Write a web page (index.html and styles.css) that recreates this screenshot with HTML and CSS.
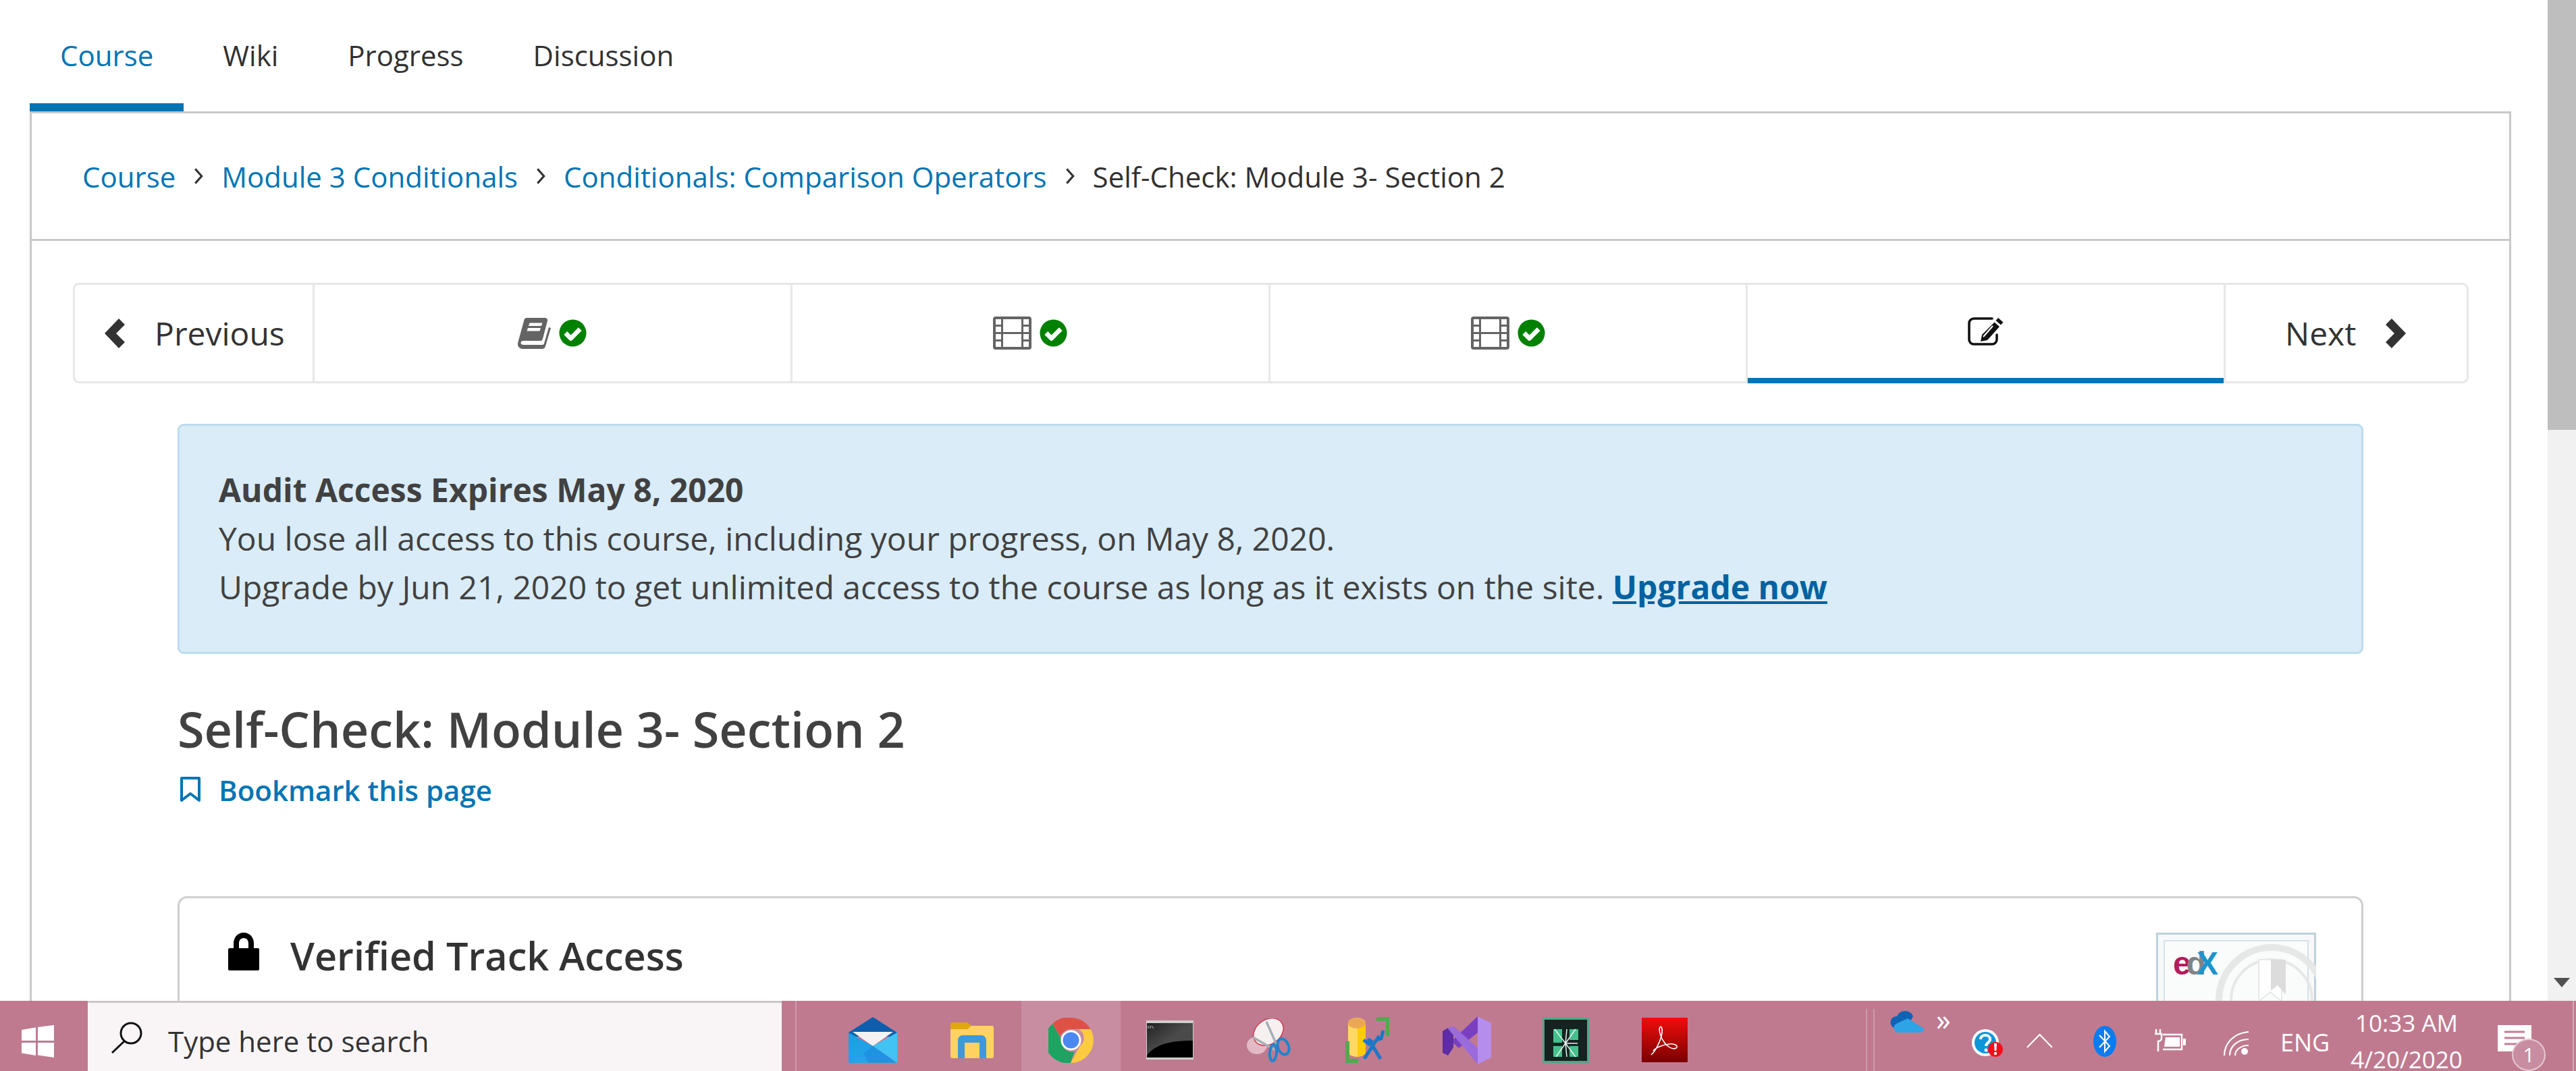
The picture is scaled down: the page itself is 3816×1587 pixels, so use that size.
FILE: index.html
```html
<!DOCTYPE html>
<html lang="en">
<head>
<meta charset="utf-8">
<title>Self-Check: Module 3- Section 2</title>
<link rel="stylesheet" href="styles.css">
</head>
<body>
<svg class="defs" width="0" height="0" aria-hidden="true">
  <defs>
    <symbol id="check" viewBox="0 0 42 42">
      <circle cx="21" cy="21" r="20.5" fill="#008100"/>
      <path d="M10 21l8 8 14-14" fill="none" stroke="#fff" stroke-width="7" stroke-linejoin="round"/>
    </symbol>
    <symbol id="film" viewBox="0 0 57 49">
      <path fill="#646464" fill-rule="evenodd" d="M4 0h49a4 4 0 0 1 4 4v41a4 4 0 0 1-4 4H4a4 4 0 0 1-4-4V4a4 4 0 0 1 4-4zM4 4v8h8V4zM4 15v8h8v-8zM4 26v8h8v-8zM4 37v8h8v-8zM45 4v8h8V4zM45 15v8h8v-8zM45 26v8h8v-8zM45 37v8h8v-8zM15 4v19h27V4zM15 26v19h27V26z"/>
    </symbol>
    <symbol id="chev-l" viewBox="0 0 30 44">
      <path fill="#333" d="M0 22L21 0l9 9-13 13 13 13-9 9z"/>
    </symbol>
    <symbol id="chev-r" viewBox="0 0 30 44">
      <path fill="#333" d="M30 22L9 0 0 9l13 13L0 35l9 9z"/>
    </symbol>
  </defs>
</svg>
<div class="page">
  <div class="viewport">
    <div class="content">
      <nav class="tabs">
        <a class="tab tab-active">Course</a>
        <a class="tab">Wiki</a>
        <a class="tab">Progress</a>
        <a class="tab">Discussion</a>
      </nav>
      <div class="frame">
        <div class="crumbs">
          <a class="crumb-link">Course</a>
          <svg class="crumb-sep" viewBox="0 0 12 22"><path d="M2 2l8 9-8 9" fill="none" stroke="#333" stroke-width="2.6"/></svg>
          <a class="crumb-link">Module 3 Conditionals</a>
          <svg class="crumb-sep" viewBox="0 0 12 22"><path d="M2 2l8 9-8 9" fill="none" stroke="#333" stroke-width="2.6"/></svg>
          <a class="crumb-link">Conditionals: Comparison Operators</a>
          <svg class="crumb-sep" viewBox="0 0 12 22"><path d="M2 2l8 9-8 9" fill="none" stroke="#333" stroke-width="2.6"/></svg>
          <span class="crumb-current">Self-Check: Module 3- Section 2</span>
        </div>
        <div class="unit">
          <div class="seq">
            <button class="seq-btn seq-prev"><svg class="chev"><use href="#chev-l"/></svg><span>Previous</span></button>
            <button class="seq-item">
              <svg class="ico-book" viewBox="0 0 49 46"><path fill="#646464" d="M13 0h27c3 0 4.500 2 4 4.500L37 31c-.7 2.500-2 3-4 3H9c-3 0-4.500 1-4.500 3s1.500 3 4.500 3h27c1.500 0 2.500-.5 3-2l7-24 3 1-8 27c-.7 2.500-2.500 4-5 4H8c-5 0-8.500-3.500-8-8 .3-2 1-4 1.500-6L9.500 3C10 1 11 0 13 0z"/><path fill="#fff" d="M17.500 7.500h19l-1.500 4.500h-19zM15 15h19l-1.500 4.500h-19z"/></svg>
              <svg class="ico-check"><use href="#check"/></svg>
            </button>
            <button class="seq-item"><svg class="ico-film"><use href="#film"/></svg><svg class="ico-check"><use href="#check"/></svg></button>
            <button class="seq-item"><svg class="ico-film"><use href="#film"/></svg><svg class="ico-check"><use href="#check"/></svg></button>
            <button class="seq-item seq-active">
              <svg class="ico-edit" viewBox="0 0 53 42"><path d="M36 2H9a7 7 0 0 0-7 7v24a7 7 0 0 0 7 7h27a7 7 0 0 0 7-7v-7" fill="none" stroke="#111" stroke-width="3.600" stroke-linecap="round"/><path fill="#111" d="M45 1l7.500 6.500-3.500 4-7.500-6.500zM39.500 7.500l7.500 6.500-18 20-10 2 2-10z"/><path d="M37 13L23 29" stroke="#fff" stroke-width="2"/></svg>
            </button>
            <button class="seq-btn seq-next"><span>Next</span><svg class="chev"><use href="#chev-r"/></svg></button>
          </div>
          <div class="course-body">
            <div class="alert">
              <p class="alert-title">Audit Access Expires May 8, 2020</p>
              <p class="alert-line">You lose all access to this course, including your progress, on May 8, 2020.</p>
              <p class="alert-line">Upgrade by Jun 21, 2020 to get unlimited access to the course as long as it exists on the site. <a class="alert-link">Upgrade now</a></p>
            </div>
            <h1 class="title">Self-Check: Module 3- Section 2</h1>
            <a class="bookmark">
              <svg class="ico-bookmark" viewBox="0 0 32 38"><path d="M3 2h26v33L16 25 3 35z" fill="none" stroke="#0075b4" stroke-width="4" stroke-linejoin="round"/></svg>
              <span>Bookmark this page</span>
            </a>
            <section class="lock-card">
              <div class="lock-head">
                <svg class="ico-lock" viewBox="0 0 46 56"><path fill="#000" d="M23 0c10 0 15 8 15 16v7h6a2 2 0 0 1 2 2v29a2 2 0 0 1-2 2H2a2 2 0 0 1-2-2V25a2 2 0 0 1 2-2h6v-7C8 8 13 0 23 0zm0 8c-5 0-7 4-7 8v7h14v-7c0-4-2-8-7-8z"/></svg>
                <h2 class="lock-title">Verified Track Access</h2>
              </div>
              <div class="cert">
                <svg class="cert-art" viewBox="0 0 237 110">
                  <rect x="1.500" y="1.500" width="234" height="140" fill="#f6f8f9" stroke="#bfd2da" stroke-width="3"/>
                  <rect x="12" y="12" width="213" height="130" fill="#fafbfb" stroke="#d4e2e8" stroke-width="2"/>
                  <circle cx="171" cy="100" r="78" fill="none" stroke="#e6e7e7" stroke-width="10"/>
                  <circle cx="171" cy="100" r="60" fill="none" stroke="#e6e7e7" stroke-width="4"/>
                  <path d="M152 40h34v62l-17-14-17 14z" fill="#fff" stroke="#e6e7e7" stroke-width="2"/>
                  <path d="M170 40h22v52l-12-14-10 8z" fill="#dcdcdc"/>
                  <text class="edx" x="25" y="62"><tspan class="edx-e">e</tspan><tspan class="edx-d" dx="-7">d</tspan><tspan class="edx-x" dx="-14">X</tspan></text>
                </svg>
              </div>
            </section>
          </div>
        </div>
      </div>
    </div>
    <div class="scrollbar">
      <div class="thumb"></div>
      <svg class="scroll-arrow" viewBox="0 0 24 14"><path fill="#505050" d="M0 0h24L12 14z"/></svg>
    </div>
  </div>
  <footer class="taskbar">
    <div class="start">
      <svg class="ico-win" viewBox="0 0 48 48"><path fill="#fff" d="M0 7l21-3.500v19.500H0zM24 3L48 0v23H24zM0 26h21v19L0 41.500zM24 26h24v22l-24-3.500z"/></svg>
    </div>
    <div class="search">
      <svg class="ico-search" viewBox="0 0 50 48"><circle cx="30" cy="18" r="15" fill="none" stroke="#111" stroke-width="3"/><path d="M20 30L2 47" stroke="#111" stroke-width="3"/></svg>
      <span class="search-text">Type here to search</span>
    </div>
    <div class="grip"></div>
    <div class="apps">
      <div class="app">
        <svg class="ico-mail" viewBox="0 0 72 68"><defs><linearGradient id="mail-a" x1="0" y1="0" x2="1" y2="1"><stop offset="0" stop-color="#1d9de2"/><stop offset="1" stop-color="#27a9ef"/></linearGradient></defs><path fill="#0e5ead" d="M36 0l36 23v6H0v-6z"/><path fill="#f4f2f2" d="M6 22h60L36 43z"/><path fill="#41c3f4" d="M72 23v45L36 43z"/><path fill="url(#mail-a)" d="M0 23l36 20 36 25H0z"/><path fill="#1b7fd4" d="M36 43l36 25H30l-8-14z" opacity=".45"/></svg>
      </div>
      <div class="app">
        <svg class="ico-folder" viewBox="0 0 64 53"><path fill="#e0a80d" d="M3 0h22l6 5-6 5H0V3a3 3 0 0 1 3-3z"/><path fill="#ffd262" d="M0 10h25l6-5h30a3 3 0 0 1 3 3v42a3 3 0 0 1-3 3H3a3 3 0 0 1-3-3z"/><path fill="#3f98dd" d="M11 53V27c0-5 3-8 8-8h26c5 0 8 3 8 8v26H43V30H21v23z"/></svg>
      </div>
      <div class="app app-active">
        <svg class="ico-chrome" viewBox="0 0 67 67"><path fill="#de5246" d="M33.500 0A33.500 33.500 0 0 1 62.500 17H33.500a17 17 0 0 0-16 11L6 9A33.500 33.500 0 0 1 33.500 0z"/><path fill="#1ea362" d="M6 9l14 24a15 15 0 0 0 19 17L33 67A33.500 33.500 0 0 1 6 9z"/><path fill="#fdcb40" d="M62.500 17A33.500 33.500 0 0 1 33 67l14-25a15 15 0 0 0-2-25z"/><circle cx="33.500" cy="33.500" r="15" fill="#fff"/><circle cx="33.500" cy="33.500" r="12" fill="#4b88f2"/></svg>
      </div>
      <div class="app">
        <svg class="ico-term" viewBox="0 0 70 58"><defs><linearGradient id="term-g" x1="0" y1="0" x2="1" y2="1"><stop offset="0" stop-color="#222"/><stop offset=".5" stop-color="#4a4a4a"/></linearGradient></defs><rect width="70" height="58" fill="#cfcfcf"/><rect x="1" y="4" width="68" height="51" fill="#000"/><path fill="url(#term-g)" d="M1 4h68v26c-30 0-55 4-68 22z"/><path d="M3 8v4M6 8v4M8 8l3 4" stroke="#ccc" stroke-width="1"/></svg>
      </div>
      <div class="app">
        <svg class="ico-snip" viewBox="0 0 66 65"><ellipse cx="15" cy="40" rx="15" ry="13" fill="#e3b9c6"/><ellipse cx="32" cy="20" rx="24" ry="18" transform="rotate(-35 32 20)" fill="#f6f0f1" stroke="#d0384c" stroke-width="1.500"/><path d="M29 5l16 36M9 28l33 19" stroke="#a9aeb3" stroke-width="3.500"/><ellipse cx="54" cy="42" rx="8" ry="12" transform="rotate(-20 54 42)" fill="none" stroke="#1d85cc" stroke-width="4"/><ellipse cx="39" cy="51" rx="5" ry="12" transform="rotate(5 39 51)" fill="none" stroke="#1d85cc" stroke-width="4"/></svg>
      </div>
      <div class="app">
        <svg class="ico-db" viewBox="0 0 67 68"><path fill="#ffd966" d="M4 9c0-5 7-8 13-8s13 3 13 8v42c0 5-7 8-13 8S4 56 4 51z"/><path fill="#ffcc00" d="M18 5c8 0 12 2 12 5v42c0 4-6 6-12 7z"/><ellipse cx="17" cy="9" rx="13" ry="8" fill="#eaa857"/><path fill="#52a94f" d="M46 0h19v28h-5V6H46zM0 36h6v26h13v6H0z"/><path d="M28 62l22-34M52 62L34 32M27 34l8 6 5-6M45 34l8-2 3-12" fill="none" stroke="#1a78c6" stroke-width="5"/></svg>
      </div>
      <div class="app">
        <svg class="ico-vs" viewBox="0 0 72 71"><path fill="#b58ded" d="M52 0l20 10v51L52 71z"/><path fill="#7a3fc0" d="M52 0v24L24 47 13 37z"/><path fill="#5e2ca5" d="M0 22l8-5 8 11v18L8 58l-8-4z"/><path fill="#9a6bdb" d="M7 17l45 54V47L17 15z"/></svg>
      </div>
      <div class="app">
        <svg class="ico-kin" viewBox="0 0 69 67"><rect x="1.500" y="1.500" width="66" height="64" fill="#14231f" stroke="#4aa888" stroke-width="3"/><path fill="#46c08f" d="M16 17h13v20H16zM40 17h13v16H40zM16 42h13v16H16zM40 42h13v16H40z"/><path d="M34 38L18 17M34 38l2-21M34 38l15-21M34 38l-14 20M34 38l2 20M34 38h18M34 38l15 20" stroke="#e8f2ee" stroke-width="1.500" fill="none"/></svg>
      </div>
      <div class="app">
        <svg class="ico-pdf" viewBox="0 0 68 66"><defs><linearGradient id="pdf-g" x1="0" y1="0" x2="0" y2="1"><stop offset="0" stop-color="#f20c0c"/><stop offset="1" stop-color="#7a0000"/></linearGradient></defs><rect width="68" height="66" fill="url(#pdf-g)"/><path d="M14 55c6-5 14-20 16-32 1-7-1-11-3-9-2 3 0 14 6 22 4 6 12 12 18 9 4-3-2-7-10-6-9 1-20 5-24 10" fill="none" stroke="#fff" stroke-width="1.600"/></svg>
      </div>
    </div>
    <div class="tray">
      <div class="tray-grip"></div>
      <div class="overflow">
        <svg class="ico-cloud" viewBox="0 0 50 32"><path fill="#0f63b5" d="M9 26a9 9 0 0 1 1-18c2-5 7-8 12-8 6 0 10 3 12 8l-10 18z"/><path fill="#2ea3e6" d="M12 32a7 7 0 0 1-3-13l17-8 24 15c0 4-3 6-6 6z"/></svg>
        <span class="more">»</span>
      </div>
      <svg class="ico-help" viewBox="0 0 46 43"><circle cx="20" cy="21" r="20" fill="#fff"/><circle cx="20" cy="21" r="16" fill="#0b97d9"/><path d="M13 16c0-4 3-6 7-6s7 2 7 6c0 5-6 5-6 10" fill="none" stroke="#fff" stroke-width="4"/><circle cx="21" cy="32" r="2.500" fill="#fff"/><circle cx="35" cy="31" r="11" fill="#f40f1a"/><path fill="#fff" d="M33 22h4l-.6 11h-2.800z"/><circle cx="35" cy="37" r="2.200" fill="#fff"/></svg>
      <svg class="ico-caret" viewBox="0 0 39 21"><path d="M1 20L19.500 1 38 20" fill="none" stroke="#fff" stroke-width="2.200"/></svg>
      <svg class="ico-bt" viewBox="0 0 34 46"><ellipse cx="17" cy="23" rx="17" ry="23" fill="#0b7cf0"/><path d="M9 14l15 16-7 8V8l7 8-15 16" fill="none" stroke="#fff" stroke-width="2"/></svg>
      <svg class="ico-power" viewBox="0 0 48 33"><path d="M4 0v7M10 0v7M2 7h10v6c0 3-2 5-5 5v15M14 8h28v22H14" fill="none" stroke="#fff" stroke-width="2.500"/><path fill="#fff" d="M18 12h21v14H16zM44 14h4v10h-4z"/></svg>
      <svg class="ico-wifi" viewBox="0 0 40 36"><path d="M2 36C2 18 16 3 38 1M10 36c0-13 11-24 28-24M18 36c0-8 8-15 20-15" fill="none" stroke="#fff" stroke-width="2.200"/><circle cx="32" cy="30" r="5" fill="#fff"/></svg>
      <span class="lang">ENG</span>
      <div class="clock"><span>10:33 AM</span><span>4/20/2020</span></div>
      <div class="notify">
        <svg class="ico-note" viewBox="0 0 50 40"><path fill="#fff" d="M0 0h50v39H30l-8 1v-1H0z"/><path d="M10 10h30M10 19h30M10 28h20" stroke="#c27e94" stroke-width="3"/></svg>
        <span class="badge">1</span>
      </div>
      <div class="edge"></div>
    </div>
  </footer>
</div>
</body>
</html>
```
FILE: styles.css
```css
* { box-sizing: border-box; }
html, body { margin: 0; height: 100%; overflow: hidden; background: #fff; }
body { font-family: "Open Sans", "Noto Sans", sans-serif; color: #414141; }
.defs { display: block; height: 0; }
svg { display: block; flex: none; }
p, h1, h2 { margin: 0; }

.page { display: flex; flex-direction: column; height: 1587px; }
.viewport { flex: 1; min-height: 0; display: flex; overflow: hidden; }
.content { flex: 1; min-width: 0; padding: 0 54px 0 44px; }

.tabs { display: flex; gap: 13px; height: 165px; }
.tab { display: flex; align-items: center; padding: 10px 45px 0; height: 165px; font-size: 42px; color: #313131; border-bottom: 12px solid transparent; }
.tab-active { color: #0075b4; border-bottom-color: #0075b4; }

.frame { border: 3px solid #c8c8c8; border-bottom: 0; }
.crumbs { display: flex; align-items: center; height: 189px; padding: 0 0 0 75px; border-bottom: 3px solid #c8c8c8; font-size: 42px; color: #313131; }
.crumb-link { color: #0075b4; }
.crumb-sep { width: 16px; height: 26px; margin: 0 26px; }
.crumb-current { color: #313131; }

.unit { padding: 62px 60px 0 61px; }
.seq { display: grid; grid-template-columns: 355px repeat(4, 1fr) 357px; height: 149px; border: 3px solid #e7e7e7; border-radius: 9px; }
.seq-btn, .seq-item { display: flex; align-items: center; border: 0; border-right: 3px solid #e7e7e7; background: none; padding: 0; margin: 0; font: inherit; font-size: 48px; color: #333; }
.seq-next { border-right: 0; }
.seq-item { justify-content: center; gap: 12px; }
.seq-prev { padding-left: 44px; gap: 44px; }
.seq-next { padding-left: 88px; gap: 44px; }
.seq-active { padding-bottom: 8px; margin-bottom: -3px; box-shadow: inset 0 -8px 0 #0075b4; }
.chev { width: 30px; height: 44px; }
.ico-book { width: 49px; height: 46px; }
.ico-check { width: 41px; height: 41px; }
.ico-film { width: 57px; height: 49px; }
.ico-edit { width: 53px; height: 42px; }

.course-body { padding: 0 156px 0 155px; }
.alert { margin-top: 60px; height: 341px; padding: 59px 58px; background: #d9ecf8; border: 3px solid #bcdcee; border-radius: 9px; font-size: 48px; line-height: 72px; }
.alert-title { font-weight: 700; }
.alert-link { font-weight: 700; color: #0062a0; text-decoration: underline; }

.title { margin-top: 66px; font-size: 72px; line-height: 90px; font-weight: 600; color: #414141; }
.bookmark { display: flex; align-items: center; gap: 26px; height: 60px; margin-top: 15px; padding-left: 3px; font-size: 42px; font-weight: 600; color: #0075b4; }
.ico-bookmark { width: 32px; height: 38px; }

.lock-card { display: flex; justify-content: space-between; margin-top: 128px; height: 400px; border: 3px solid #cfcfcf; border-radius: 14px; padding: 51px 67px 0 72px; }
.lock-head { display: flex; align-items: flex-start; gap: 46px; }
.ico-lock { width: 46px; height: 56px; }
.lock-title { font-size: 57.600px; line-height: 68px; font-weight: 600; color: #333; }
.cert { width: 237px; height: 120px; }
.cert-art { width: 237px; height: 110px; }
.edx { font-family: "Liberation Sans", sans-serif; font-weight: 700; font-size: 48px; }
.edx-e { fill: #b51c5c; }
.edx-d { fill: #808285; }
.edx-x { fill: #1c94cc; }

.scrollbar { flex: none; width: 42px; background: #f1f1f1; display: flex; flex-direction: column; align-items: center; justify-content: space-between; padding-bottom: 20px; }
.thumb { width: 100%; height: 637px; background: #bebebe; }
.scroll-arrow { width: 24px; height: 14px; }

.taskbar { flex: none; height: 104px; display: flex; background: #bf7a90; color: #fff; }
.start { flex: none; width: 130px; padding: 36px 0 0 32px; }
.ico-win { width: 48px; height: 48px; }
.search { flex: none; width: 1028px; display: flex; align-items: center; gap: 35px; padding: 0 0 0 34px; background: #f9f5f7; border-top: 3px solid #cbc7c9; color: #333; }
.ico-search { width: 50px; height: 48px; }
.search-text { font-size: 42px; padding-top: 11px; }
.grip { flex: none; width: 42px; margin-left: 20px; border-left: 2px solid #cf9aab; }
.apps { flex: none; display: flex; width: 1320px; }
.app { width: 146.600px; display: flex; align-items: center; justify-content: center; padding-top: 12px; }
.app-active { background: #c98da2; }
.ico-mail { width: 72px; height: 68px; }
.ico-folder { width: 64px; height: 53px; }
.ico-chrome { width: 67px; height: 67px; }
.ico-term { width: 70px; height: 58px; }
.ico-snip { width: 66px; height: 65px; }
.ico-db { width: 67px; height: 68px; }
.ico-vs { width: 72px; height: 71px; }
.ico-kin { width: 69px; height: 67px; }
.ico-pdf { width: 68px; height: 66px; }

.tray { flex: 1; display: flex; align-items: flex-start; padding-left: 224px; min-width: 0; }
.tray-grip { width: 13px; height: 92px; margin-top: 12px; border-left: 2px solid #cf9aab; border-right: 2px solid #cf9aab; flex: none; }
.overflow { display: flex; gap: 18px; margin: 15px 0 0 23px; width: 121px; flex: none; }
.ico-cloud { width: 50px; height: 32px; }
.more { font-size: 44px; line-height: 24px; }
.ico-help { width: 46px; height: 43px; margin-top: 41px; }
.ico-caret { width: 39px; height: 21px; margin: 49px 0 0 35px; }
.ico-bt { width: 34px; height: 46px; margin: 37px 0 0 60px; }
.ico-power { width: 48px; height: 33px; margin: 42px 0 0 55px; }
.ico-wifi { width: 40px; height: 36px; margin: 45px 0 0 55px; }
.lang { flex: none; width: 70px; font-size: 36px; line-height: 44px; margin: 40px 0 0 45px; white-space: nowrap; }
.clock { flex: none; display: flex; flex-direction: column; align-items: center; gap: 20px; width: 162px; margin-left: 36px; margin-top: 16px; font-size: 35px; line-height: 34px; white-space: nowrap; }
.notify { position: relative; width: 50px; margin: 36px 0 0 54px; flex: none; }
.ico-note { width: 50px; height: 40px; }
.badge { position: absolute; left: 21px; top: 20px; width: 50px; height: 48px; border: 2px solid #e6c8d2; border-radius: 50%; background: #c98da2; font-size: 30px; line-height: 44px; text-align: center; }
.edge { width: 2px; height: 104px; margin-left: 61px; background: #d7a8b7; flex: none; }
```
